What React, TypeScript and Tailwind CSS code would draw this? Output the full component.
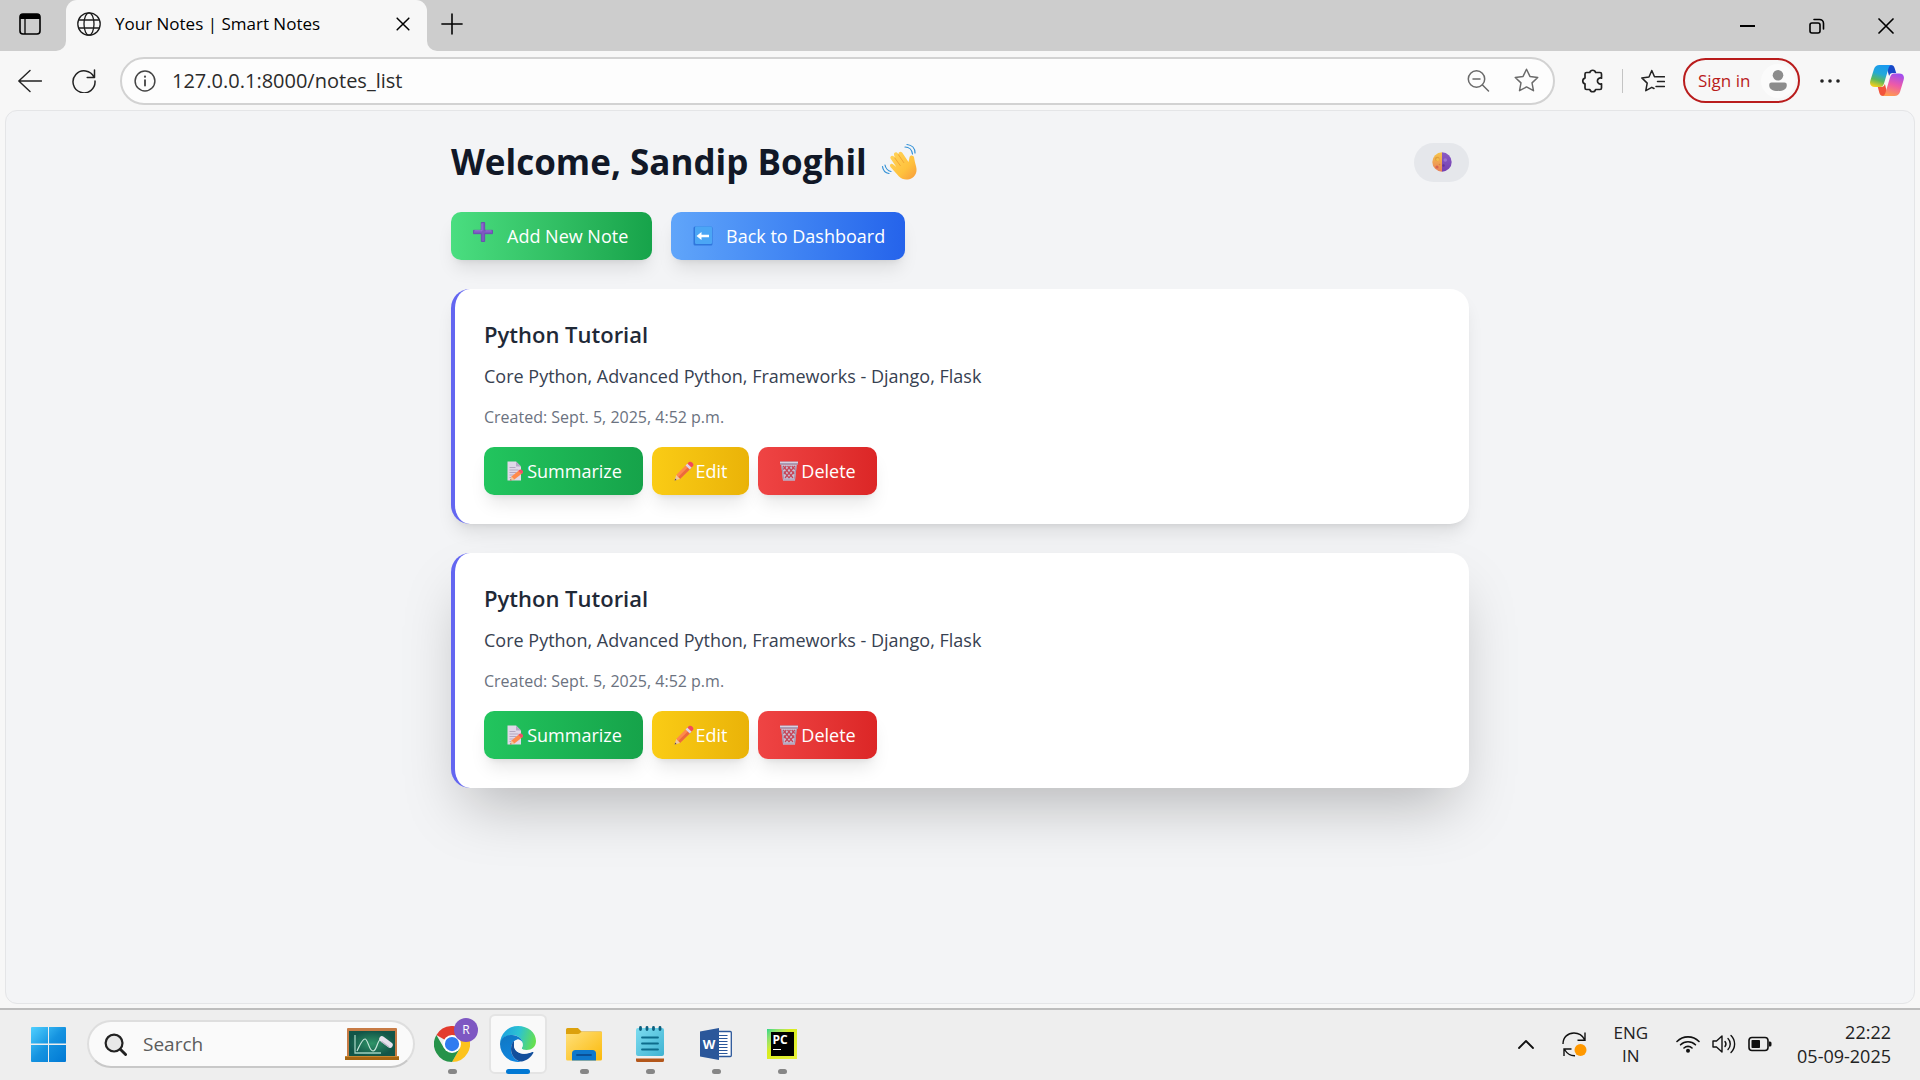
import type { ReactNode } from "react";

type IconProps = { className?: string };

/* ---------- emoji drawings ---------- */

function WaveEmoji() {
  return (
    <svg viewBox="0 0 38 38" className="h-[38px] w-[38px]" aria-label="waving hand" role="img">
      <defs>
        <linearGradient id="hand" x1="0" y1="0" x2="1" y2="1">
          <stop offset="0" stopColor="#ffd45c" />
          <stop offset="0.6" stopColor="#ffc23d" />
          <stop offset="1" stopColor="#f79a3c" />
        </linearGradient>
      </defs>
      <g fill="none" stroke="#2f8fd6" strokeWidth="1.2" strokeLinecap="round">
        <path d="M24 4c4 0 7 3 7.500 7M26 1.500c5 .5 8 4 8 8.500" />
        <path d="M4 22c.5 3 3 6 6 6.500M1.500 23.500c.5 4 3.500 6.500 6.500 7" />
      </g>
      <path
        d="M18 33.500L9.500 24c-1.600-2 .8-4.300 2.800-2.600l3 2.600-5.600-8.200c-1.400-2.300 1.500-4.200 3.200-2.200l1 1.200-.8-2.600c-.9-2.400 2.200-4 3.800-1.800l.7.900c-.6-2.500 2.200-3.700 3.700-1.500l6.200 9.200 1-4.800c.5-2.600 4.300-2.200 4.600.4.300 2.400.8 4.400 2 8.800 1.800 6.500-1.800 12-8.100 13-3.600.5-6.600-.4-9-2.900z"
        fill="url(#hand)"
      />
      <path d="M13.800 15l5.500 7.600M17.500 11.800l5.300 7.800" fill="none" stroke="#f0a030" strokeWidth="0.9" strokeLinecap="round" />
    </svg>
  );
}

function MoonEmoji() {
  return (
    <svg viewBox="1 0 20 20" className="h-5 w-5" aria-hidden="true">
      <defs>
        <linearGradient id="moonL" x1="0" y1="0" x2="0" y2="1">
          <stop offset="0" stopColor="#f7c64a" />
          <stop offset="1" stopColor="#e8805a" />
        </linearGradient>
        <linearGradient id="moonR" x1="0" y1="0" x2="0" y2="1">
          <stop offset="0" stopColor="#8a5cc4" />
          <stop offset="1" stopColor="#7440b0" />
        </linearGradient>
      </defs>
      <path d="M11 0.300A9.700 9.700 0 0 0 11 19.700z" fill="url(#moonL)" />
      <path d="M11 0.300A9.700 9.700 0 0 1 11 19.700z" fill="url(#moonR)" />
      <circle cx="6.300" cy="7" r="2.300" fill="#e0a03a" />
      <circle cx="6.700" cy="7.400" r="1.500" fill="#f2bd50" />
      <circle cx="6" cy="15" r="1.600" fill="#d86450" />
      <circle cx="8.500" cy="12.500" r="0.800" fill="#d88a3c" />
      <circle cx="14.300" cy="8" r="1.800" fill="#9a72cf" />
      <circle cx="12.500" cy="13.500" r="1.200" fill="#643599" />
    </svg>
  );
}

function PlusEmoji() {
  return (
    <svg viewBox="0 0 20 20" className="mb-2 h-5 w-5" aria-hidden="true">
      <path d="M8.300.5h3.400v7.800h7.800v3.400h-7.800v7.800H8.300v-7.800H.5V8.300h7.800z" fill="#7e57c2" stroke="#6a45b0" strokeWidth="0.800" strokeLinejoin="round" />
      <path d="M9 1.500v7.300H1.500M12.500 8.900h6" fill="none" stroke="#9d7ad8" strokeWidth="0.900" />
    </svg>
  );
}

function BackEmoji() {
  return (
    <svg viewBox="0 0 20 20" className="h-5 w-5" aria-hidden="true">
      <rect x="0.500" y="0.500" width="19" height="19" rx="1.500" fill="#2f76dc" />
      <rect x="2" y="0.500" width="17" height="17.500" rx="1.200" fill="#4ba6f5" />
      <path d="M3.500 10l5-4v2.700H16v2.600H8.500V14z" fill="#fff" />
    </svg>
  );
}

function MemoEmoji() {
  return (
    <svg viewBox="0 0 20 20" className="h-5 w-5" aria-hidden="true">
      <path d="M2.500.5h8.500l5 5V19.500H2.500z" fill="#e0d8e8" />
      <path d="M11 .5v5h5z" fill="#b7a9c7" />
      <path d="M4.500 6.500h6M4.500 9h9M4.500 11.500h7M4.500 14h5M4.500 16.500h3" stroke="#b3a7c0" strokeWidth="1.100" />
      <path d="M5.300 19.600l1.200-4 8.200-6.800 3 3.200-8.300 6.600z" fill="#ff8a4c" />
      <path d="M13.400 9.800l1.300-1c1.600-1.400 4.500 1.500 3 3.200l-1.300 1z" fill="#f0506a" />
      <path d="M5.300 19.600l1.200-4 3 3z" fill="#f3c9a0" />
      <path d="M5.300 19.600l.4-1.600 1 1.200z" fill="#5a4a5a" />
    </svg>
  );
}

function PencilEmoji() {
  return (
    <svg viewBox="0 0 20 20" className="h-5 w-5" aria-hidden="true">
      <path d="M2.200 14L12.800 3.200l4.200 4L6 18z" fill="#ff8a4c" />
      <path d="M4.200 16L15 5.200l2 2L6 18z" fill="#ec6a3c" />
      <path d="M11.600 4.400l1.800-1.800 4.200 4-1.800 1.900z" fill="#ddd3e8" />
      <path d="M13.400 2.600L15 1.100c2-1.700 5.700 1.900 4 4l-1.400 1.500z" fill="#f2495c" />
      <path d="M2.200 14L.6 19.500 6 18z" fill="#f0c8a0" />
      <path d="M1.200 17.500l-.6 2 2-.5z" fill="#564552" />
    </svg>
  );
}

function TrashEmoji() {
  return (
    <svg viewBox="0 0 20 20" className="h-5 w-5" aria-hidden="true">
      <path d="M2.200 3.500h15.600L16 19.500H4z" fill="#c9bfd2" />
      <g stroke="#c5475a" strokeWidth="1.200" fill="none">
        <path d="M4.200 5l9.800 12M8.500 5l6.700 8M12.700 5l3 3.500M4.800 10.500l5.400 6.700" />
        <path d="M15.800 5L6 17M11.500 5l-6.700 8M7.300 5l-3 3.500M15.200 10.500l-5.400 6.700" />
      </g>
      <path d="M3 5l1.600 14M17 5l-1.600 14" stroke="#9f93ad" strokeWidth="1.100" />
      <path d="M1 .5h18v3.200H1z" fill="#a79bb5" />
      <path d="M1 .8h18v1.200H1z" fill="#d9d1e0" />
      <path d="M4 17.500h12v2H4z" fill="#b5aac2" />
    </svg>
  );
}

/* ---------- line icons ---------- */

function Line({ size = "h-6 w-6", width = 1.4, color = "#222", children }: { size?: string; width?: number; color?: string; children: ReactNode }) {
  return (
    <svg viewBox="0 0 24 24" className={size} fill="none" stroke={color} strokeWidth={width} strokeLinecap="round" strokeLinejoin="round" aria-hidden="true">
      {children}
    </svg>
  );
}

function CopilotIcon() {
  return (
    <svg viewBox="0 0 34 31" className="h-[31px] w-[34px]" aria-hidden="true">
      <defs>
        <linearGradient id="cpA" x1="0.600" y1="0" x2="0.300" y2="1">
          <stop offset="0" stopColor="#1a9af0" />
          <stop offset="0.400" stopColor="#22a8d8" />
          <stop offset="0.700" stopColor="#5cb85c" />
          <stop offset="1" stopColor="#f4cf1c" />
        </linearGradient>
        <linearGradient id="cpB" x1="0.700" y1="0" x2="0.400" y2="1">
          <stop offset="0" stopColor="#a04df0" />
          <stop offset="0.500" stopColor="#ee5aa8" />
          <stop offset="1" stopColor="#ff9a50" />
        </linearGradient>
      </defs>
      <path d="M16 0h5c2 0 3 1 3.600 3l1.600 5h-3.500c-2 0-3 1-3.600 3z" fill="#1848c8" />
      <path d="M18 31h-5c-2 0-3-1-3.600-3L7.800 22h3.500c2 0 3-1 3.600-3z" fill="#f2543c" />
      <path d="M9.500 0H22c-2 0-3 1.500-3.700 4L14 18.500C13.200 21 12 22 10 22H5c-4 0-5.800-2.500-4.600-6.500L4 4C5 1.300 6.700 0 9.500 0z" fill="url(#cpA)" />
      <path d="M24.500 31H12c2 0 3-1.500 3.700-4L20 12.500C20.800 10 22 8.500 24 8.500h5c4 0 5.800 2.500 4.600 6.500L30 27c-1 2.700-2.700 4-5.500 4z" fill="url(#cpB)" />
    </svg>
  );
}

/* ---------- browser chrome ---------- */

function TabStrip() {
  return (
    <header className="flex h-[51px] shrink-0 bg-[#f7f7f7]">
      <div className="flex w-[66px] items-center rounded-br-[10px] bg-[#cdcdcd] pl-[19px]">
        <button aria-label="Tab actions" className="mb-[3px]">
          <svg viewBox="0 0 22 22" className="h-[22px] w-[22px]" aria-hidden="true">
            <rect x="1" y="1" width="20" height="20" rx="3" fill="none" stroke="#000" strokeWidth="1.600" />
            <path d="M1 6V4a3 3 0 0 1 3-3h14a3 3 0 0 1 3 3v2z" fill="#000" />
            <path d="M6 6v15" stroke="#000" strokeWidth="1.300" />
          </svg>
        </button>
      </div>
      <div className="w-[361px] bg-[#cdcdcd]">
        <div className="flex h-full items-center rounded-t-[11px] bg-[#f7f7f7] pb-[3px] pl-[11px] pr-[14px]">
          <svg viewBox="0 0 24 24" className="h-6 w-6" fill="none" stroke="#1c1c1c" strokeWidth="1.300" aria-hidden="true">
            <circle cx="12" cy="12" r="11.200" />
            <ellipse cx="12" cy="12" rx="5" ry="11.200" />
            <path d="M1.800 8h20.400M1.800 16h20.400" />
          </svg>
          <span className="ml-[14px] flex-1 whitespace-nowrap text-[17px] text-black">Your Notes | Smart Notes</span>
          <button aria-label="Close tab" className="p-[3px]">
            <Line size="h-[14px] w-[14px]" width={2.6} color="#000">
              <path d="M2 2l20 20M22 2L2 22" />
            </Line>
          </button>
        </div>
      </div>
      <div className="flex flex-1 items-center justify-between rounded-bl-[10px] bg-[#cdcdcd]">
        <button aria-label="New tab" className="mb-1 ml-[14px]">
          <Line size="h-[22px] w-[22px]" width={1.7} color="#000">
            <path d="M12 1v22M1 12h22" />
          </Line>
        </button>
        <div className="flex h-full">
          <button aria-label="Minimize" className="flex w-[69px] items-center justify-center">
            <span className="h-[2px] w-[15px] bg-black" />
          </button>
          <button aria-label="Restore" className="flex w-[69px] items-center justify-center">
            <svg viewBox="0 0 16 16" className="h-4 w-4" fill="none" stroke="#000" strokeWidth="1.600" strokeLinecap="round" aria-hidden="true">
              <rect x="1" y="5" width="10" height="10" rx="2" />
              <path d="M5 1.500h5.500a4 4 0 0 1 4 4V11" />
            </svg>
          </button>
          <button aria-label="Close window" className="flex w-[69px] items-center justify-center">
            <Line size="h-4 w-4" width={2.5} color="#000">
              <path d="M1.500 1.500l21 21M22.500 1.500l-21 21" />
            </Line>
          </button>
        </div>
      </div>
    </header>
  );
}

const STAR = "M12 1.200l3.300 6.900 7.500 1-5.500 5.200 1.400 7.500L12 18.200l-6.700 3.600 1.400-7.500L1.200 9.100l7.500-1z";

function ToolButton({ label, wide, children }: { label: string; wide?: boolean; children: ReactNode }) {
  return (
    <button aria-label={label} className={wide ? "flex w-[54px] shrink-0 justify-center" : "flex w-12 shrink-0 justify-center"}>
      {children}
    </button>
  );
}

function Toolbar() {
  return (
    <div className="flex h-[59px] shrink-0 items-center bg-[#f7f7f7] pl-[3px] pr-[9px]">
      <ToolButton label="Back" wide>
        <Line width={1.4}>
          <path d="M23.500 12H.8M12 1.500L.8 12 12 22.500" />
        </Line>
      </ToolButton>
      <ToolButton label="Reload" wide>
        <Line width={1.5}>
          <path d="M22 8.200A11 11 0 1 0 23 12M22.500 1v7.400h-7.300" />
        </Line>
      </ToolButton>
      <div className="ml-[9px] flex h-[48px] flex-1 items-center rounded-full border-2 border-[#d2d2d2] bg-[#fdfdfd] pl-3 pr-[14px]">
        <Line size="h-[22px] w-[22px]" width={1.6} color="#444">
          <circle cx="12" cy="12" r="10.800" />
          <path d="M12 11v6" strokeWidth="2" />
          <circle cx="12" cy="7.300" r="0.500" strokeWidth="1.400" />
        </Line>
        <input aria-label="Address" defaultValue="127.0.0.1:8000/notes_list" className="ml-4 min-w-0 flex-1 bg-transparent text-[20px] text-[#2b2b2b] outline-none" />
        <button aria-label="Zoom out" className="mr-6">
          <Line width={1.5} color="#6a6a6a">
            <circle cx="10.500" cy="10" r="8.200" />
            <path d="M16.500 16l6 6M7 10h7" />
          </Line>
        </button>
        <button aria-label="Add to favorites">
          <Line size="h-[25px] w-[25px]" width={1.4} color="#6a6a6a">
            <path d={STAR} />
          </Line>
        </button>
      </div>
      <div className="ml-[13px] flex items-center">
        <ToolButton label="Extensions">
          <Line width={1.7}>
            <path d="M6.500 3.500h3.300a3 3 0 0 1 5.800 0h4.400A1.500 1.500 0 0 1 21.500 5v4.200a3 3 0 1 0 0 5.600V19a1.500 1.500 0 0 1-1.500 1.500h-4.400a3 3 0 0 1-5.800 0H6.500A1.500 1.500 0 0 1 5 19v-4.100a3 3 0 0 1 0-5.800V5A1.500 1.500 0 0 1 6.500 3.500z" />
          </Line>
        </ToolButton>
        <span className="mx-[6px] h-6 w-px bg-[#c4c4c4]" />
        <ToolButton label="Favorites">
          <Line width={1.5}>
            <path d="M14.500 7.800h9M16.500 12.600h7M15 17.500h8.500" />
            <path d="M13.500 7.800L10.800 1.500 8 8 .8 8.900l5.400 5.200-1.400 7.600 6-3.400 2.200 1.200" />
          </Line>
        </ToolButton>
        <button className="ml-[6px] flex h-[45px] w-[117px] items-center justify-between rounded-full border-2 border-[#b91c1c] pl-[13px] pr-[3px] text-[17px] text-[#b91c1c]">
          Sign in
          <span className="flex h-[34px] w-[34px] items-center justify-center rounded-full bg-[#fbfbfb]">
            <svg viewBox="0 0 18 21" className="h-[21px] w-[18px]" fill="#8c8c8c" aria-hidden="true">
              <circle cx="9" cy="5.300" r="5.300" />
              <path d="M2.500 12.500h13a2.300 2.300 0 0 1 2.300 2.400c0 4-3.300 6-8.800 6s-8.800-2-8.800-6a2.300 2.300 0 0 1 2.300-2.400z" />
            </svg>
          </span>
        </button>
        <span className="ml-[6px] mr-[9px]">
          <ToolButton label="Settings and more">
            <svg viewBox="0 0 20 4" className="h-1 w-5" fill="#222" aria-hidden="true">
              <circle cx="2" cy="2" r="1.800" />
              <circle cx="10" cy="2" r="1.800" />
              <circle cx="18" cy="2" r="1.800" />
            </svg>
          </ToolButton>
        </span>
        <ToolButton label="Copilot">
          <CopilotIcon />
        </ToolButton>
      </div>
    </div>
  );
}

/* ---------- notes page ---------- */

type Note = { id: number; title: string; body: string; created: string; raised?: boolean };

const notes: Note[] = [
  { id: 1, title: "Python Tutorial", body: "Core Python, Advanced Python, Frameworks - Django, Flask", created: "Sept. 5, 2025, 4:52 p.m." },
  { id: 2, title: "Python Tutorial", body: "Core Python, Advanced Python, Frameworks - Django, Flask", created: "Sept. 5, 2025, 4:52 p.m.", raised: true },
];

const BUTTON =
  "flex h-12 items-center rounded-[10px] text-[18px] text-white shadow-[0_12px_18px_-4px_rgba(0,0,0,0.1),0_5px_7px_-5px_rgba(0,0,0,0.1)] bg-linear-to-r";

function NoteCard({ note }: { note: Note }) {
  const shadow = note.raised
    ? "shadow-[0_30px_60px_-14px_rgba(0,0,0,0.25)]"
    : "shadow-[0_12px_18px_-4px_rgba(0,0,0,0.1),0_5px_7px_-5px_rgba(0,0,0,0.1)]";
  return (
    <article className={`rounded-[19px] border-l-4 border-[#6366f1] bg-white p-[29px] ${shadow}`}>
      <h2 className="text-[22px] font-semibold leading-8 text-[#1f2937]">{note.title}</h2>
      <p className="mt-3 text-[18px] leading-[29px] text-[#374151]">{note.body}</p>
      <p className="mt-[14px] text-[16px] leading-6 text-[#6b7280]">Created: {note.created}</p>
      <div className="mt-[18px] flex gap-[9px]">
        <button className={`${BUTTON} w-[159px] justify-center from-[#22c55e] to-[#16a34a]`}>
          <MemoEmoji />
          <span className="ml-[2px]">Summarize</span>
        </button>
        <button className={`${BUTTON} w-[97px] justify-center from-[#facc15] to-[#eab308]`}>
          <PencilEmoji />
          <span className="ml-[2px]">Edit</span>
        </button>
        <button className={`${BUTTON} w-[119px] justify-center from-[#ef4444] to-[#dc2626]`}>
          <TrashEmoji />
          <span className="ml-[2px]">Delete</span>
        </button>
      </div>
    </article>
  );
}

function NotesPage() {
  return (
    <main className="mx-[5px] mb-1 flex-1 overflow-hidden rounded-[12px] border border-[#e4e5e7] bg-[#f3f4f6]">
      <div className="mx-auto max-w-[1018px] pt-[29px]">
        <div className="flex items-center justify-between">
          <h1 className="flex items-center gap-[14px] text-[35px] font-bold leading-[44px] text-[#111827]">
            Welcome, Sandip Boghil
            <WaveEmoji />
          </h1>
          <button aria-label="Toggle theme" className="flex h-[39px] w-[55px] items-center justify-center rounded-full bg-[#e5e7eb]">
            <MoonEmoji />
          </button>
        </div>
        <nav className="mt-7 flex gap-[19px]">
          <a href="#add" className={`${BUTTON} w-[201px] gap-[14px] pl-[22px] from-[#4ade80] to-[#16a34a]`}>
            <PlusEmoji />
            Add New Note
          </a>
          <a href="#dashboard" className={`${BUTTON} w-[234px] gap-[13px] pl-[22px] from-[#60a5fa] to-[#2563eb]`}>
            <BackEmoji />
            Back to Dashboard
          </a>
        </nav>
        <div className="mt-[29px] flex flex-col gap-[29px]">
          {notes.map((n) => (
            <NoteCard key={n.id} note={n} />
          ))}
        </div>
      </div>
    </main>
  );
}

/* ---------- taskbar ---------- */

function StartLogo() {
  return (
    <svg viewBox="0 0 35 35" className="h-[35px] w-[35px]" aria-hidden="true">
      <defs>
        <linearGradient id="win" x1="0" y1="0" x2="35" y2="35" gradientUnits="userSpaceOnUse">
          <stop offset="0" stopColor="#4fd0ff" />
          <stop offset="0.500" stopColor="#1593e0" />
          <stop offset="1" stopColor="#0078d4" />
        </linearGradient>
      </defs>
      <path d="M1 0h16v16.500H0V1a1 1 0 0 1 1-1zM18 0h16a1 1 0 0 1 1 1v15.500H18zM0 18h17v17H1a1 1 0 0 1-1-1zM18 18h17v16a1 1 0 0 1-1 1H18z" fill="url(#win)" />
    </svg>
  );
}

function Chalkboard() {
  return (
    <svg viewBox="0 0 54 32" className="h-8 w-[54px]" aria-hidden="true">
      <defs>
        <radialGradient id="board">
          <stop offset="0" stopColor="#2f9468" />
          <stop offset="1" stopColor="#125548" />
        </radialGradient>
      </defs>
      <rect x="2" y="0" width="50" height="29" rx="1" fill="#c77b45" />
      <rect x="4" y="3" width="46" height="25" fill="url(#board)" />
      <rect x="0" y="28" width="54" height="4" rx="0.500" fill="#a56512" />
      <path d="M0 28.500h54" stroke="#c88732" />
      <path d="M10 7v18h26" fill="none" stroke="#9fd0bf" strokeWidth="1.300" />
      <path d="M12 23c3-6 5-12 8-12s4 12 8 12 4-11 8-12" fill="none" stroke="#c7e6da" strokeWidth="1.200" />
      <path d="M37 11l8 6" stroke="#e6e2ec" strokeWidth="5.500" strokeLinecap="round" />
      <path d="M36.500 13.500l7.500 5.500" stroke="#b9b3c4" strokeWidth="1.200" />
    </svg>
  );
}

function ChromeIcon() {
  return (
    <svg viewBox="0 0 48 48" className="h-9 w-9" aria-hidden="true">
      <path d="M24 24L3.200 12A24 24 0 0 1 44.800 12z" fill="#e33b2e" />
      <path d="M24 12h20.800A24 24 0 0 1 24 48l10.400-18z" fill="#fcc31e" />
      <path d="M3.200 12A24 24 0 0 0 24 48l10.400-18H13.600z" fill="#26934a" />
      <circle cx="24" cy="24" r="12" fill="#fff" />
      <circle cx="24" cy="24" r="9.500" fill="#2f7cf0" />
    </svg>
  );
}

function EdgeIcon() {
  return (
    <svg viewBox="0 0 36 36" className="h-9 w-9" aria-hidden="true">
      <defs>
        <linearGradient id="edTop" x1="0" y1="0.300" x2="1" y2="0.500">
          <stop offset="0" stopColor="#1c9fe0" />
          <stop offset="0.500" stopColor="#2cc3d2" />
          <stop offset="1" stopColor="#66e04e" />
        </linearGradient>
        <linearGradient id="edLeft" x1="0.300" y1="0" x2="0.600" y2="1">
          <stop offset="0" stopColor="#1078c4" />
          <stop offset="1" stopColor="#0f86e0" />
        </linearGradient>
      </defs>
      <path d="M0 18A18 18 0 0 1 18 0c10 0 18 6.500 18 15 0 6-4.500 9-9.500 9-3 0-5-.9-5-2 0-.7 1.200-1.300 1.200-4C22.700 13 18 9 12 9 6 9 1 12.500 0 18z" fill="url(#edTop)" />
      <path d="M0 18C.5 12.500 5.500 9 12 9c5.500 0 10.700 3.500 10.700 9 0-3-2.700-4.500-4.700-4.500-3.500 0-7 4-7 9.500 0 6.500 5 12.300 10 12.700A18 18 0 0 1 0 18z" fill="url(#edLeft)" />
      <path d="M14 15c-2 1.500-3 4.500-3 8 0 7 5.500 13 11 12.500 5-1 9-4.300 11.300-8.500.5-.8-.3-1.300-1-.9C25 29.500 14 28 14 19z" fill="#134f9c" />
      <path d="M17.500 13.600c-2.500 1-4 4-3.500 7 .8 4.500 5 7.200 10 7.200 4 0 7-1.200 9.500-3.800-3 1.700-8.500 1.200-11-.5-1.300-1-.5-1.500.1-3 .8-3-1.600-6.500-5.100-6.900z" fill="#f9f9f9" />
    </svg>
  );
}

function FolderIcon() {
  return (
    <svg viewBox="0 0 36 33" className="h-[33px] w-9" aria-hidden="true">
      <defs>
        <linearGradient id="fold" x1="0" y1="0" x2="1" y2="1">
          <stop offset="0" stopColor="#ffe07a" />
          <stop offset="1" stopColor="#fbb90a" />
        </linearGradient>
      </defs>
      <path d="M0 1.500A1.500 1.500 0 0 1 1.500 0H11c1 0 1.500.4 2.200 1.200L15.500 3.500H35a1 1 0 0 1 1 1V12H0z" fill="#dca10c" />
      <path d="M0 6h12c1.500 0 2.500-2 4-2h20v27a1.500 1.500 0 0 1-1.500 1.500h-33A1.500 1.500 0 0 1 0 31z" fill="url(#fold)" />
      <path d="M6 32.500v-7A3.500 3.500 0 0 1 9.500 22h17a3.500 3.500 0 0 1 3.500 3.500v7z" fill="#0f78cc" />
      <path d="M11 27h14" stroke="#0a4f96" strokeWidth="1.800" strokeLinecap="round" />
    </svg>
  );
}

function NotepadIcon() {
  return (
    <svg viewBox="0 0 28 36" className="h-9 w-7" aria-hidden="true">
      <defs>
        <linearGradient id="pad" x1="0" y1="0" x2="1" y2="1">
          <stop offset="0" stopColor="#7ddcf0" />
          <stop offset="1" stopColor="#3fb3d2" />
        </linearGradient>
      </defs>
      <path d="M0 30h28v4.500a1.500 1.500 0 0 1-1.500 1.500h-25A1.500 1.500 0 0 1 0 34.500z" fill="#b3571b" />
      <path d="M0 28h28v4.500H0z" fill="#f1f0ef" />
      <path d="M0 4a2 2 0 0 1 2-2h24a2 2 0 0 1 2 2v24a2 2 0 0 1-2 2H2a2 2 0 0 1-2-2z" fill="url(#pad)" />
      <path d="M4.500 1.500v2M11 1.500v2M17.500 1.500v2M24 1.500v2" stroke="#0d5f7e" strokeWidth="2.800" strokeLinecap="round" />
      <path d="M6 11.500h16M6 17.500h16M6 23.500h16" stroke="#0d6c8c" strokeWidth="1.800" strokeLinecap="round" />
    </svg>
  );
}

function WordIcon() {
  return (
    <svg viewBox="0 0 32 32" className="h-8 w-8" aria-hidden="true">
      <path d="M18 3.500h12.300a1 1 0 0 1 1 1v23a1 1 0 0 1-1 1H18" fill="#fff" stroke="#2b579a" strokeWidth="1.300" />
      <path d="M19 7.500h8.500M19 10.500h8.500M19 13.500h8.500M19 16.500h8.500M19 19.500h8.500M19 22.500h8.500M19 25.500h8.500" stroke="#2b579a" strokeWidth="1.200" />
      <path d="M0 3.500L19 0v32L0 28.500z" fill="#2b579a" />
      <text x="9" y="21" textAnchor="middle" fill="#fff" className="text-[13px] font-bold">
        W
      </text>
    </svg>
  );
}

function PyCharmIcon() {
  return (
    <span className="flex h-[30px] w-[30px] items-center justify-center bg-linear-to-br from-[#21d789] via-[#d8ec1c] via-40% to-[#e8f03a]">
      <span className="flex h-6 w-[23px] flex-col items-start bg-black pl-[2px] text-[12px] font-bold leading-[15px] text-white">
        PC
        <span className="mt-[2px] h-px w-2 bg-white" />
      </span>
    </span>
  );
}

type AppEntry = { name: string; icon: ReactNode; active?: boolean; badge?: string };

const apps: AppEntry[] = [
  { name: "Chrome", icon: <ChromeIcon />, badge: "R" },
  { name: "Edge", icon: <EdgeIcon />, active: true },
  { name: "File Explorer", icon: <FolderIcon /> },
  { name: "Notepad", icon: <NotepadIcon /> },
  { name: "Word", icon: <WordIcon /> },
  { name: "PyCharm", icon: <PyCharmIcon /> },
];

function AppButton({ app }: { app: AppEntry }) {
  return (
    <button
      aria-label={app.name}
      className={
        app.active
          ? "relative flex h-[60px] w-[58px] items-center justify-center rounded-[6px] border-2 border-[#e4e4e4] bg-[#f9f9f9]"
          : "relative flex h-[60px] w-[58px] items-center justify-center"
      }
    >
      {app.icon}
      {app.badge && (
        <span className="absolute right-[3px] top-1 flex h-6 w-6 items-center justify-center rounded-full bg-[#7e57c2] text-[12px] text-white">{app.badge}</span>
      )}
      <span
        className={
          app.active
            ? "absolute -bottom-[2px] h-[5px] w-6 rounded-full bg-[#0078d4]"
            : "absolute bottom-0 h-[5px] w-[9px] rounded-full bg-[#868686]"
        }
      />
    </button>
  );
}

function WifiIcon({ className }: IconProps) {
  return (
    <svg viewBox="0 0 24 18" className={className} fill="none" stroke="#111" strokeWidth="1.600" strokeLinecap="round" aria-hidden="true">
      <path d="M1 6.500a15.500 15.500 0 0 1 22 0M4.600 9.800a10.500 10.500 0 0 1 14.800 0M8 13a5.800 5.800 0 0 1 8 0" />
      <circle cx="12" cy="15.800" r="2" fill="#111" stroke="none" />
    </svg>
  );
}

function Taskbar() {
  return (
    <footer className="flex h-[72px] shrink-0 items-center border-t-2 border-[#bdbdbd] bg-[#eeeeee] pb-[2px] pl-[31px] pr-[29px] text-[#222]">
      <button aria-label="Start">
        <StartLogo />
      </button>
      <label className="ml-[21px] flex h-12 w-[328px] items-center rounded-full border-2 border-b-[#c8c8c8] border-[#dedede] bg-[#fafafa] pl-[15px] pr-[14px]">
        <Line size="h-[23px] w-[23px]" width={2.3}>
          <circle cx="10.500" cy="10.500" r="8.800" fill="#e8e8e8" />
          <path d="M17 17l5.500 5.500" strokeWidth="3" />
        </Line>
        <input aria-label="Search" placeholder="Search" className="ml-4 min-w-0 flex-1 bg-transparent text-[19px] outline-none placeholder:text-[#5c5c5c]" />
        <Chalkboard />
      </label>
      <div className="ml-2 flex gap-2">
        {apps.map((a) => (
          <AppButton key={a.name} app={a} />
        ))}
      </div>
      <div className="ml-auto flex items-center">
        <button aria-label="Show hidden icons" className="mr-[27px]">
          <svg viewBox="0 0 16 10" className="h-[10px] w-4" fill="none" stroke="#111" strokeWidth="1.800" strokeLinecap="round" strokeLinejoin="round" aria-hidden="true">
            <path d="M1 9l7-7 7 7" />
          </svg>
        </button>
        <button aria-label="Update available" className="mr-[26px]">
          <svg viewBox="0 0 26 26" className="h-[26px] w-[26px]" fill="none" stroke="#111" strokeWidth="1.400" aria-hidden="true">
            <path d="M2 13C2 6 7 2 13 2c5 0 8.500 2.500 10.500 6.500M24 1.500v7.800h-7.500M3 25v-7h7.500M3.500 18.500C6 22.500 9 25 14 24.800" />
            <circle cx="19.500" cy="19" r="6" fill="#ff9800" stroke="none" />
          </svg>
        </button>
        <div className="mr-7 text-center text-[17px] leading-[23px]">
          <p>ENG</p>
          <p>IN</p>
        </div>
        <WifiIcon className="mr-3 h-[18px] w-6" />
        <svg viewBox="0 0 24 20" className="mr-3 h-5 w-6" fill="none" stroke="#111" strokeWidth="1.400" strokeLinecap="round" strokeLinejoin="round" aria-hidden="true">
          <path d="M1 7h3.500L10 2v16l-5.500-5H1zM13 7.500c1.200 1.500 1.200 3.500 0 5M16 4.500c3 3 3 8 0 11M19 1.500c4.800 4.800 4.800 12.200 0 17" />
        </svg>
        <svg viewBox="0 0 24 16" className="h-4 w-6" fill="none" stroke="#111" strokeWidth="1.600" aria-hidden="true">
          <rect x="1" y="1.500" width="19" height="13" rx="3" />
          <rect x="3.500" y="4" width="8.500" height="8" rx="0.800" fill="#111" stroke="none" />
          <path d="M21 5.500h1a1.500 1.500 0 0 1 1.500 1.500v2a1.500 1.500 0 0 1-1.500 1.500h-1z" fill="#111" stroke="none" />
        </svg>
        <div className="ml-[25px] text-right text-[18px] leading-6">
          <p>22:22</p>
          <p>05-09-2025</p>
        </div>
      </div>
    </footer>
  );
}

export default function App() {
  return (
    <div className="flex h-screen flex-col overflow-hidden bg-[#f7f7f7] font-['Open_Sans','Noto_Sans',sans-serif]">
      <TabStrip />
      <Toolbar />
      <NotesPage />
      <Taskbar />
    </div>
  );
}
